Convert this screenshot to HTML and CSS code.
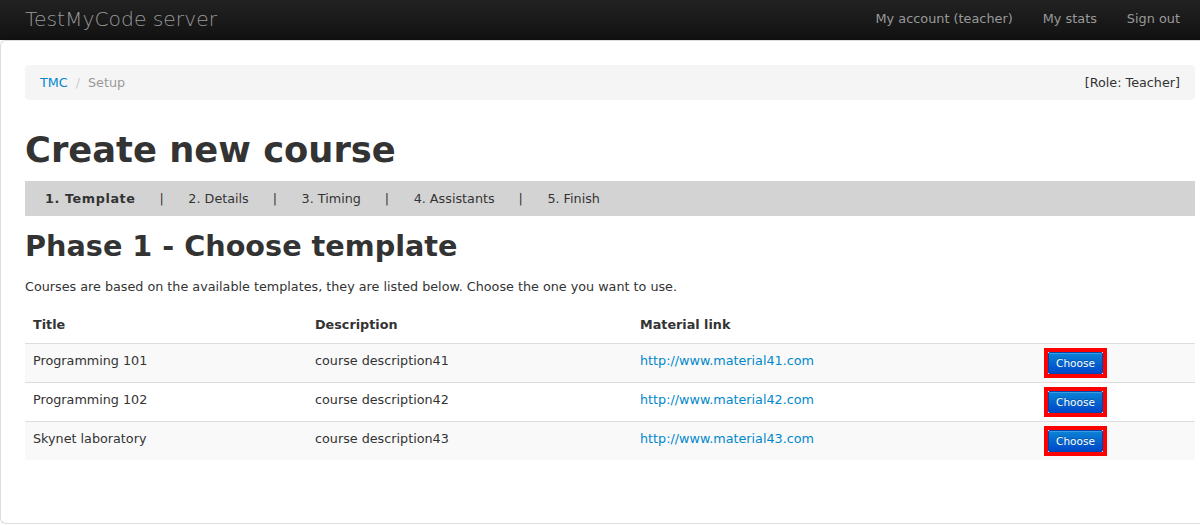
FILE: index.html
```html
<!DOCTYPE html>
<html>
<head>
<meta charset="utf-8">
<title>TestMyCode server</title>
<link rel="stylesheet" href="styles.css">
</head>
<body>
<div class="navbar">
  <a class="brand" href="#">TestMyCode server</a>
  <ul class="nav">
    <li><a href="#">My account (teacher)</a></li>
    <li><a href="#">My stats</a></li>
    <li><a href="#">Sign out</a></li>
  </ul>
</div>
<div class="page">
  <div class="breadcrumb">
    <div class="crumbs">
      <a href="#">TMC</a><span class="divider">/</span><span class="active">Setup</span>
    </div>
    <div class="role">[Role: Teacher]</div>
  </div>
  <h1>Create new course</h1>
  <div class="steps">
    <span class="step current">1. Template</span>
    <span class="sep">|</span>
    <span class="step">2. Details</span>
    <span class="sep">|</span>
    <span class="step">3. Timing</span>
    <span class="sep">|</span>
    <span class="step">4. Assistants</span>
    <span class="sep">|</span>
    <span class="step">5. Finish</span>
  </div>
  <h2>Phase 1 - Choose template</h2>
  <p class="lead-text">Courses are based on the available templates, they are listed below. Choose the one you want to use.</p>
  <table class="table">
    <thead>
      <tr>
        <th class="c1">Title</th>
        <th class="c2">Description</th>
        <th class="c3">Material link</th>
        <th class="c4"></th>
      </tr>
    </thead>
    <tbody>
      <tr>
        <td>Programming 101</td>
        <td>course description41</td>
        <td><a href="#">http://www.material41.com</a></td>
        <td class="action"><span class="frame"><button class="btn">Choose</button></span></td>
      </tr>
      <tr>
        <td>Programming 102</td>
        <td>course description42</td>
        <td><a href="#">http://www.material42.com</a></td>
        <td class="action"><span class="frame"><button class="btn">Choose</button></span></td>
      </tr>
      <tr>
        <td>Skynet laboratory</td>
        <td>course description43</td>
        <td><a href="#">http://www.material43.com</a></td>
        <td class="action"><span class="frame"><button class="btn">Choose</button></span></td>
      </tr>
    </tbody>
  </table>
</div>
</body>
</html>
```
FILE: styles.css
```css
html, body {
  margin: 0;
  padding: 0;
  background: #ffffff;
}
body {
  font-family: "DejaVu Sans", Verdana, sans-serif;
  font-size: 12.75px;
  line-height: 20px;
  color: #333333;
}
a {
  color: #0088cc;
  text-decoration: none;
}
.navbar {
  height: 40px;
  background: linear-gradient(#222222, #111111);
  display: flex;
  align-items: center;
  justify-content: space-between;
  padding: 0 5px 0 25px;
}
.brand {
  font-size: 20.3px;
  font-weight: 200;
  color: #999999;
  line-height: 20px;
  margin-top: -3px;
}
.nav {
  list-style: none;
  margin: 0;
  padding: 0;
  display: flex;
}
.nav a {
  display: block;
  padding: 0 15px;
  color: #999999;
  font-size: 12.85px;
  margin-top: -2px;
}
.page {
  border: 1px solid #dddddd;
  border-right: none;
  border-radius: 6px 0 0 6px;
  box-shadow: 0 0 3px rgba(0,0,0,0.08);
  height: 484px;
  box-sizing: border-box;
  padding: 24px 5px 0 24px;
}
.breadcrumb {
  display: flex;
  justify-content: space-between;
  background: #f5f5f5;
  border-radius: 4px;
  padding: 8px 15px 7px 15px;
  height: 35px;
  box-sizing: border-box;
  margin-bottom: 30px;
}
.divider {
  color: #cccccc;
  padding: 0 8px;
}
.active {
  color: #999999;
}
h1 {
  font-size: 35.3px;
  line-height: 40px;
  margin: 30px 0 11px;
  font-weight: bold;
}
.steps {
  background: #d3d3d3;
  height: 35px;
  display: flex;
  align-items: center;
  padding: 0 20px;
}
.step.current {
  font-weight: bold;
  letter-spacing: 0.6px;
}
.sep {
  padding: 0 24.5px 0 24px;
}
h2 {
  font-size: 28.7px;
  line-height: 40px;
  margin: 10px 0 11px;
  font-weight: bold;
}
.lead-text {
  margin: 0 0 10px;
}
.table {
  width: 1170px;
  border-collapse: collapse;
  border-spacing: 0;
}
.table th,
.table td {
  padding: 8px;
  text-align: left;
  vertical-align: top;
  line-height: 20px;
}
.table td {
  border-top: 1px solid #dddddd;
  padding: 7px 8px 7px;
}
.table td.action {
  padding: 8px;
}
.table th {
  font-weight: bold;
}
.c1 { width: 266px; }
.c2 { width: 309px; }
.c3 { width: 392px; }
.table tbody tr:nth-child(odd) td {
  background: #f9f9f9;
}
.frame {
  display: block;
  width: 55px;
  height: 22px;
  outline: 4px solid #ff0000;
  background: #f4f4f4;
}
.btn {
  display: block;
  width: 55px;
  height: 22px;
  padding: 0;
  margin: 0;
  font-family: "DejaVu Sans", Verdana, sans-serif;
  font-size: 10.5px;
  line-height: 20px;
  color: #ffffff;
  background: linear-gradient(#0a84d6, #0048c8);
  border: 1px solid #0046b0;
  border-radius: 2px;
  box-shadow: inset 0 1px 0 rgba(255,255,255,0.2);
  text-shadow: 0 -1px 0 rgba(0,0,0,0.25);
  cursor: pointer;
}
```
